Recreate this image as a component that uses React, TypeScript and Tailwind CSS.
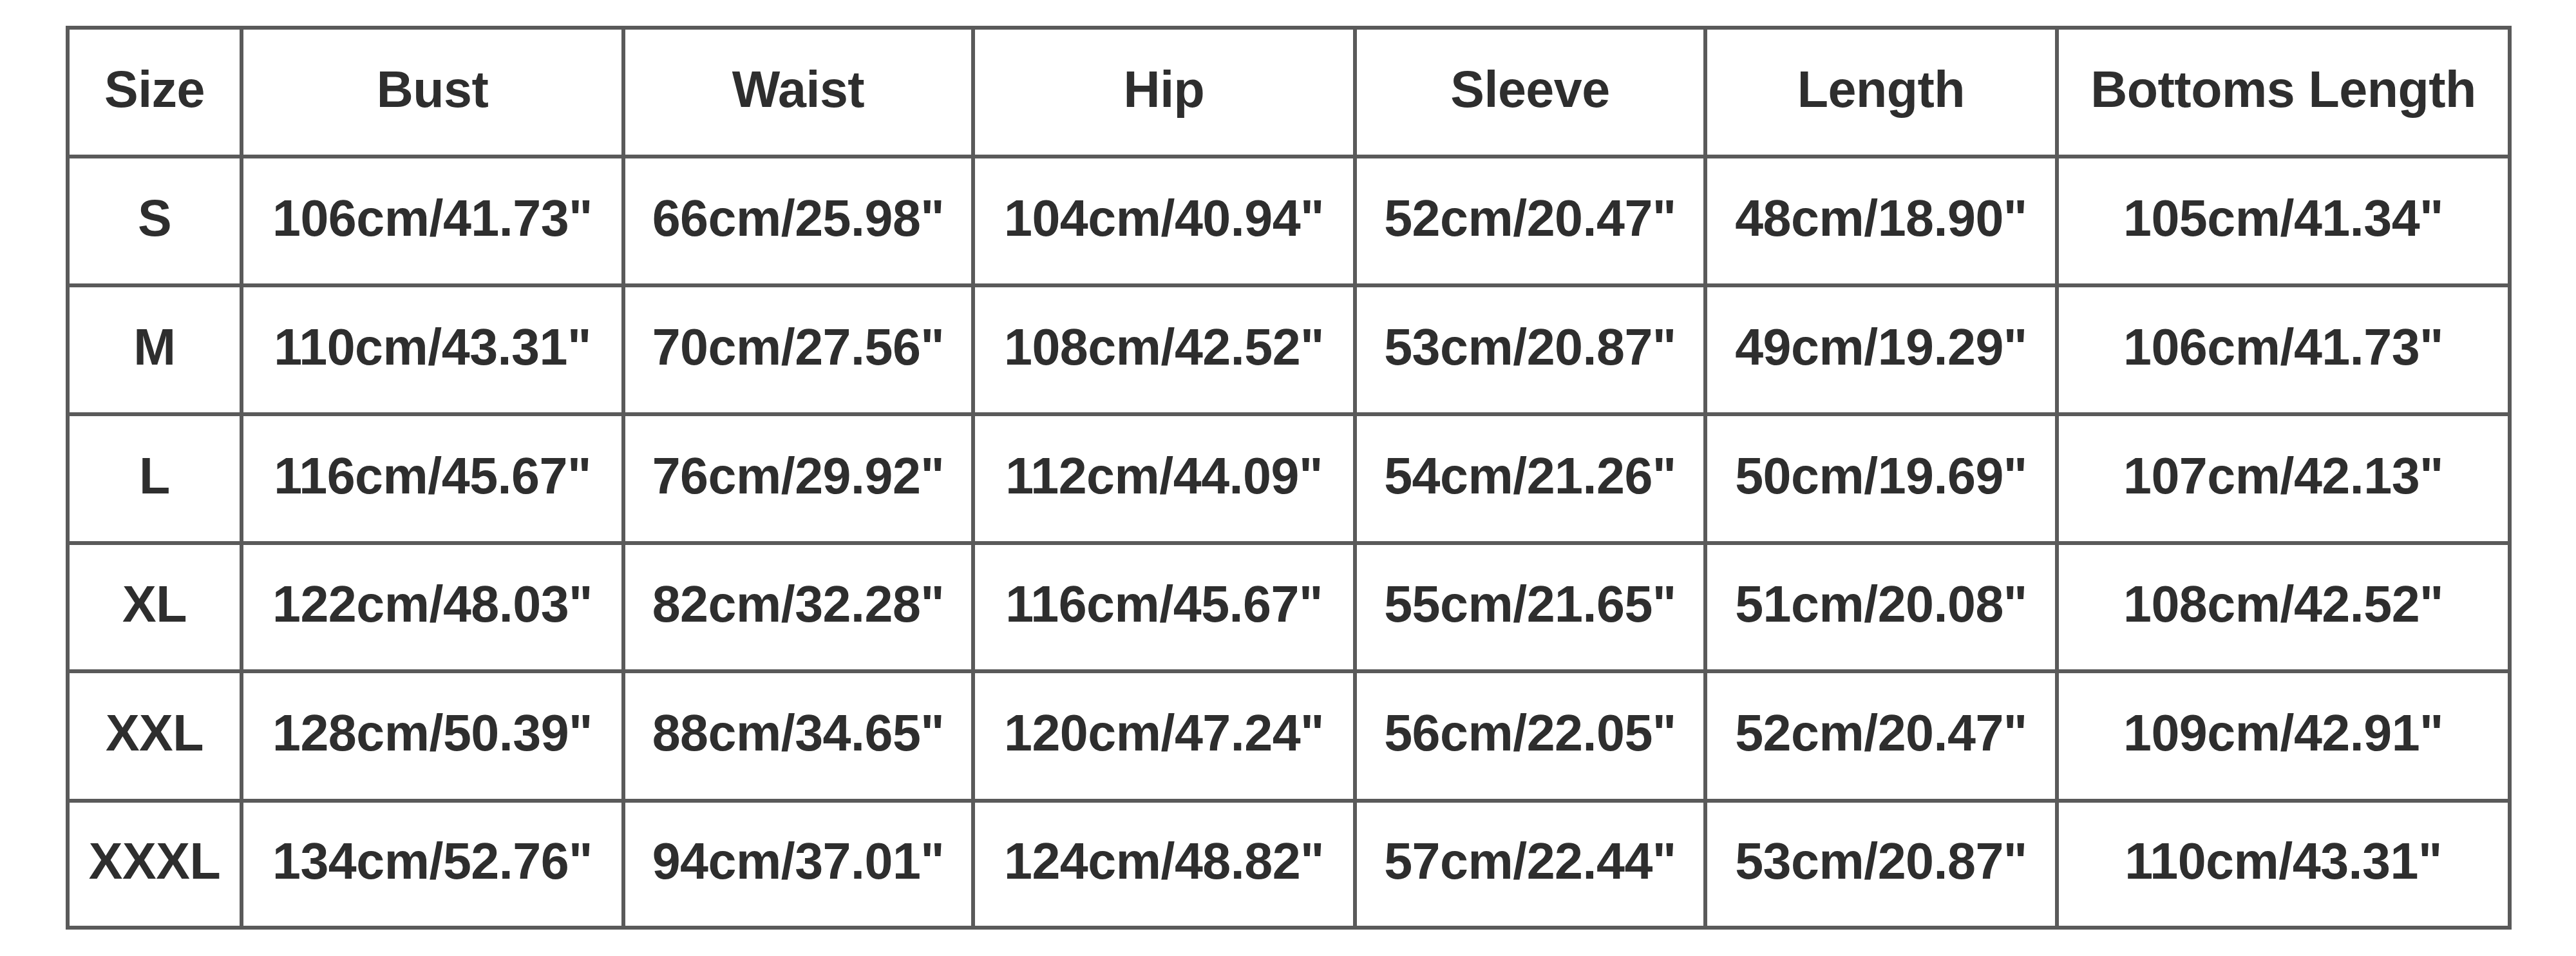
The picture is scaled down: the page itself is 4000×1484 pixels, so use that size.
import React from "react";

const headers = ["Size", "Bust", "Waist", "Hip", "Sleeve", "Length", "Bottoms Length"];

const rows: string[][] = [
  ["S", "106cm/41.73\"", "66cm/25.98\"", "104cm/40.94\"", "52cm/20.47\"", "48cm/18.90\"", "105cm/41.34\""],
  ["M", "110cm/43.31\"", "70cm/27.56\"", "108cm/42.52\"", "53cm/20.87\"", "49cm/19.29\"", "106cm/41.73\""],
  ["L", "116cm/45.67\"", "76cm/29.92\"", "112cm/44.09\"", "54cm/21.26\"", "50cm/19.69\"", "107cm/42.13\""],
  ["XL", "122cm/48.03\"", "82cm/32.28\"", "116cm/45.67\"", "55cm/21.65\"", "51cm/20.08\"", "108cm/42.52\""],
  ["XXL", "128cm/50.39\"", "88cm/34.65\"", "120cm/47.24\"", "56cm/22.05\"", "52cm/20.47\"", "109cm/42.91\""],
  ["XXXL", "134cm/52.76\"", "94cm/37.01\"", "124cm/48.82\"", "57cm/22.44\"", "53cm/20.87\"", "110cm/43.31\""],
];

function Cell({ text }: { text: string }) {
  return (
    <div className="flex items-center justify-center bg-white pb-2 whitespace-nowrap">
      {text}
    </div>
  );
}

export default function App() {
  return (
    <div className="w-[4000px] h-[1484px] bg-white pl-[102px] pt-[40px] font-['Liberation_Sans',Arial,sans-serif] font-bold text-[79px] text-[#2e2e2e] tracking-[-0.5px]">
      <div className="inline-grid grid-cols-[264px_587px_537px_587px_538px_540px_697px] grid-rows-[194px_194px_194px_194px_193px_195px_191px] gap-[6px] p-[6px] bg-[#5a5a5a]">
        {headers.map((h) => (
          <Cell key={h} text={h} />
        ))}
        {rows.map((r) => r.map((c, i) => <Cell key={r[0] + i} text={c} />))}
      </div>
    </div>
  );
}
